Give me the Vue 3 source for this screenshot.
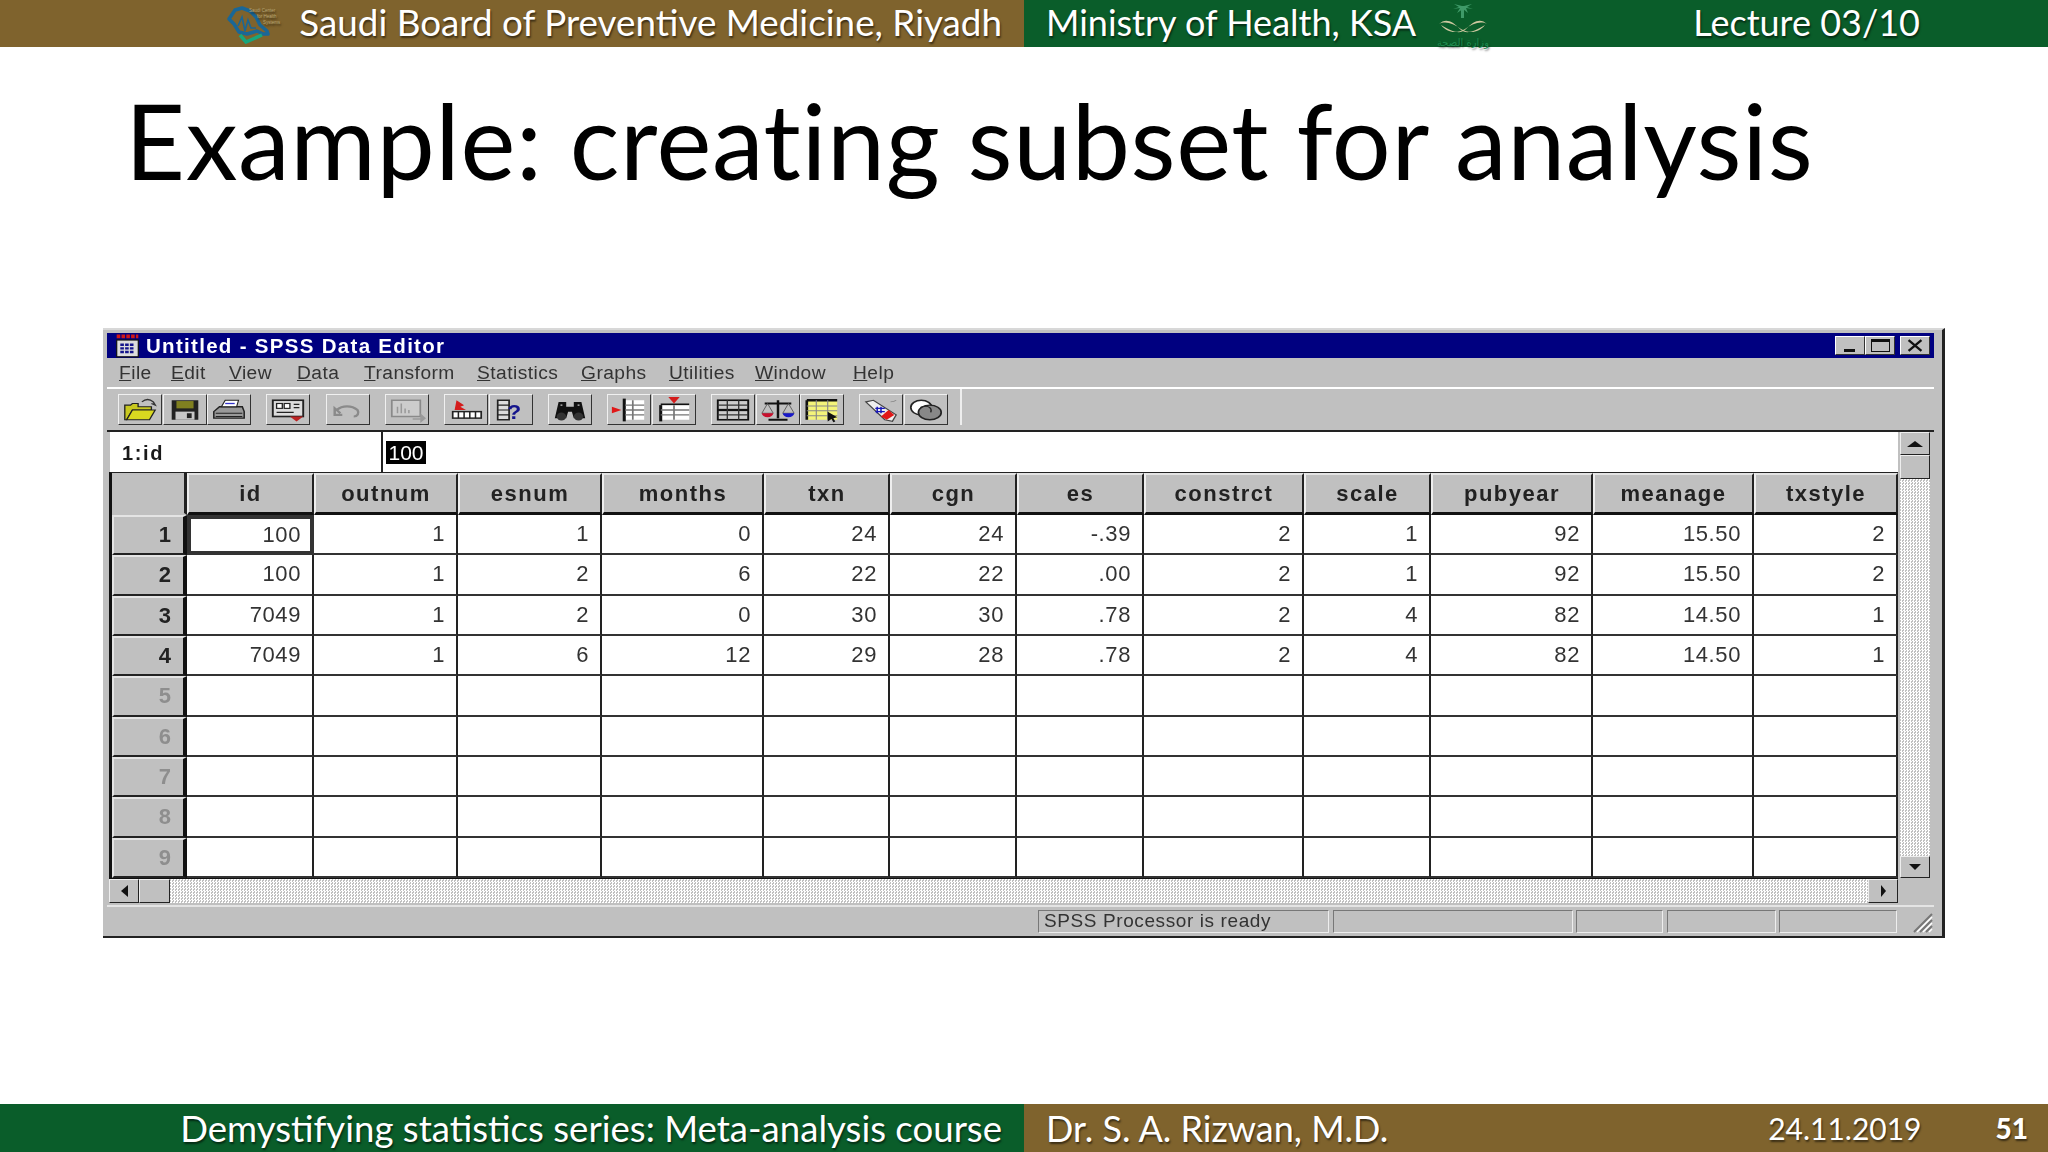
<script setup>
const columns = ['id', 'outnum', 'esnum', 'months', 'txn', 'cgn', 'es', 'constrct', 'scale', 'pubyear', 'meanage', 'txstyle']

const rows = [
  ['100', '1', '1', '0', '24', '24', '-.39', '2', '1', '92', '15.50', '2'],
  ['100', '1', '2', '6', '22', '22', '.00', '2', '1', '92', '15.50', '2'],
  ['7049', '1', '2', '0', '30', '30', '.78', '2', '4', '82', '14.50', '1'],
  ['7049', '1', '6', '12', '29', '28', '.78', '2', '4', '82', '14.50', '1'],
  [], [], [], [], [],
]

const menus = [
  { key: 'F', rest: 'ile', width: 52 },
  { key: 'E', rest: 'dit', width: 58 },
  { key: 'V', rest: 'iew', width: 68 },
  { key: 'D', rest: 'ata', width: 67 },
  { key: 'T', rest: 'ransform', width: 113 },
  { key: 'S', rest: 'tatistics', width: 104 },
  { key: 'G', rest: 'raphs', width: 88 },
  { key: 'U', rest: 'tilities', width: 86 },
  { key: 'W', rest: 'indow', width: 98 },
  { key: 'H', rest: 'elp', width: 50 },
]

const toolGroups = [
  [
    '<path d="M2 14V5h3l1-1h3v2h7v2H6l-3 6z" fill="#c8c820" stroke="#222" stroke-width=".7"/><path d="M3 14l3-6h12l-3 6z" fill="#d8d820" stroke="#222" stroke-width=".7"/><path d="M11 3c2-2 4-2 6 0l1 2-2-1" fill="none" stroke="#333" stroke-width=".8"/>',
    '<rect x="3" y="2" width="14" height="12" fill="#222"/><rect x="5.500" y="2.500" width="9" height="4.500" fill="#808020"/><rect x="5" y="9" width="10" height="5" fill="#c8c8c8"/><rect x="11" y="10" width="2.500" height="3" fill="#222"/>',
    '<path d="M2 9l3-3h12l1 3v4H2z" fill="#999" stroke="#222" stroke-width=".8"/><path d="M6 6l2-4h7l-1 4z" fill="#fff" stroke="#222" stroke-width=".6"/><path d="M8 4h5" stroke="#33c" stroke-width=".8"/><path d="M3 10h14M3 12h14" stroke="#222" stroke-width=".7"/>',
  ],
  [
    '<rect x="2" y="2" width="16" height="10" fill="#ddd" stroke="#222" stroke-width="1"/><rect x="4" y="4" width="3" height="3" fill="#fff" stroke="#222" stroke-width=".7"/><rect x="8" y="4" width="3" height="3" fill="#fff" stroke="#222" stroke-width=".7"/><path d="M13 4.500h3M13 6.500h3M4 9.500h9" stroke="#222" stroke-width=".8"/><path d="M11 12h7l-3.500 3z" fill="#b22"/>',
  ],
  [
    '<path d="M6 10L3 7v4h4M4 8c3-3 8-3 11 0 1 2 0 4-2 4" fill="none" stroke="#8a8a8a" stroke-width="1.300"/>',
  ],
  [
    '<rect x="2" y="2" width="15" height="10" fill="#ccc" stroke="#8a8a8a" stroke-width=".9"/><path d="M5 10V6M7 10V4M9 10V7M11 10V8" stroke="#999" stroke-width=".8"/><path d="M13 13h4v-3l3 3-3 3v-2h-4z" fill="#9a9a9a"/>',
  ],
  [
    '<path d="M5 2l4 3-2 1 3 2H4z" fill="#d41c1c"/><rect x="3" y="9" width="15" height="4" fill="#fff" stroke="#222" stroke-width=".9"/><path d="M6 9v4M9 9v4M12 9v4M15 9v4" stroke="#222" stroke-width=".8"/>',
    '<rect x="3" y="2" width="6" height="12" fill="#ddd" stroke="#222" stroke-width=".9"/><path d="M3 5h6M3 8h6M3 11h6" stroke="#222" stroke-width=".7"/><text x="8" y="13.500" font-family="Liberation Sans" font-weight="700" font-size="12" fill="#14148c">?</text>',
  ],
  [
    '<path d="M4 3h4v3h4V3h4l2 10h-6l-1-4h-2l-1 4H2z" fill="#111"/><circle cx="5.500" cy="12" r="2.500" fill="#333"/><circle cx="14.500" cy="12" r="2.500" fill="#333"/><path d="M5 5h1M14 5h1" stroke="#ccc" stroke-width=".8"/>',
  ],
  [
    '<rect x="8" y="2" width="10" height="12" fill="#fff"/><path d="M7.500 1v14" stroke="#111" stroke-width="1.600"/><path d="M12 2v12M8 5h10M8 8h10M8 11h10" stroke="#777" stroke-width=".9"/><path d="M1 6l5 2-5 2z" fill="#e01818"/>',
    '<rect x="3" y="5" width="15" height="9" fill="#fff"/><path d="M3 5v10" stroke="#111" stroke-width="1.600"/><path d="M3 4.500h15" stroke="#111" stroke-width="1"/><path d="M10 5v9M3 8h15M3 11h15" stroke="#777" stroke-width=".9"/><path d="M7 0h6l-3 4z" fill="#d41c1c"/>',
  ],
  [
    '<rect x="2" y="2" width="16" height="12" fill="#ccc" stroke="#111" stroke-width="1"/><path d="M2 8h16" stroke="#111" stroke-width="1.400"/><path d="M2 5h16M2 11h16M7 2v12M13 2v12" stroke="#333" stroke-width=".7"/>',
    '<path d="M10 2v11M3 4h14M5 14h10" stroke="#111" stroke-width="1.300"/><path d="M1.500 10h6l-3-6zM12.500 10h6l-3-6z" fill="none" stroke="#555" stroke-width=".5"/><path d="M1.500 10a3 2.500 0 0 0 6 0z" fill="#c8102e"/><path d="M12.500 10a3 2.500 0 0 0 6 0z" fill="#1818c8"/>',
    '<rect x="2" y="2" width="16" height="12" fill="#f4f47a"/><path d="M2 2h16M2 2v12" stroke="#111" stroke-width="1.400"/><path d="M2 5.500h16M2 8.500h16M2 11.500h16M7 2v12M13 2v12" stroke="#888" stroke-width=".6"/><path d="M13 9l5 3.500-2 .5 1 2-1 .5-1-2-2 1.500z" fill="#111"/>',
  ],
  [
    '<path d="M2 3l4-1 12 9-2 4-4-1z" fill="#eee" stroke="#444" stroke-width=".7"/><path d="M13 14l-3-2 4-4 3 3z" fill="#e01818"/><path d="M8 6v4M10 6v4M7 7h5M7 9h5" stroke="#1818b8" stroke-width=".8"/><path d="M15 3c1 0 2 0 3-1" fill="none" stroke="#888" stroke-width=".6"/>',
    '<ellipse cx="7.500" cy="6.500" rx="5.500" ry="4.500" fill="#fff" stroke="#222" stroke-width=".9"/><ellipse cx="12" cy="9.500" rx="6" ry="4.500" fill="#888" stroke="#222" stroke-width=".9"/><path d="M7 6.500c2-1 4-1 5 0 1 1 1 1.500.5 3" fill="none" stroke="#222" stroke-width=".7"/>',
  ],
]

const statusCells = [291, 240, 87, 109, 118]
</script>

<template>
  <div class="slide">
    <header class="bar top">
      <div class="half brown left">
        <svg class="board-logo" viewBox="0 0 62 40">
          <path d="M4 15L10 6l7-2 8 3 6 6 4 8 7 6 1 3-5 0-6-3-10 3-8-2-5-8z" fill="none" stroke="#1a6797" stroke-width="3.500" stroke-linejoin="round" />
          <path d="M13 22l4-9 3 14 3-11 3 8h5" fill="none" stroke="#1a6797" stroke-width="1.600" />
          <path d="M15 31l6 7 16-7" fill="none" stroke="#17a67d" stroke-width="3.500" />
          <text x="24" y="8" class="tiny">Saudi Center</text>
          <text x="32" y="14" class="tiny">for Health</text>
          <text x="38" y="20" class="tiny">Systems</text>
        </svg>
        <span>Saudi Board of Preventive Medicine, Riyadh</span>
      </div>
      <div class="half green right">
        <span>Ministry of Health, KSA</span>
        <svg class="moh-logo" viewBox="0 0 60 50">
          <path d="M29 6l-8-2 5 3-6 2 7-1-3 5 6-4 5 4-2-5 7 1-6-2 5-3-8 2z" fill="#3f9a68" />
          <path d="M28 9h3v9h-3z" fill="#3f9a68" />
          <path d="M6 24c6-6 13-4 22 6 4 3 10 4 24-5-6 8-16 9-24 4C20 23 12 21 6 24z" fill="#cfc8a0" />
          <path d="M54 24c-6-6-13-4-22 6-4 3-10 4-24-5 6 8 16 9 24 4 8-6 16-8 22-5z" fill="#cfc8a0" />
          <text x="30" y="46" class="moh-text" text-anchor="middle">وزارة الصحة</text>
        </svg>
        <span class="lecture">Lecture 03/10</span>
      </div>
    </header>

    <main class="content">
      <h1 class="heading">Example: creating subset for analysis</h1>

      <section class="win">
        <div class="titlebar">
          <svg class="app-icon" viewBox="0 0 22 20">
            <rect x="2" y="5" width="18" height="14" fill="#ddd" stroke="#111" />
            <path d="M2 2h18" stroke="#d01818" stroke-width="3" stroke-dasharray="3 1" />
            <path d="M5 9h12M5 12h12M5 15h12" stroke="#14148c" stroke-width="2" stroke-dasharray="3 1" />
          </svg>
          <span class="title-text">Untitled - SPSS Data Editor</span>
          <div class="title-btns">
            <button class="tb"><i class="glyph-min"></i></button>
            <button class="tb"><i class="glyph-max"></i></button>
            <button class="tb close">
              <svg viewBox="0 0 20 14"><path d="M4 2l12 10M16 2L4 12" stroke="#111" stroke-width="2.200" /></svg>
            </button>
          </div>
        </div>

        <nav class="menu">
          <span v-for="m in menus" :key="m.key" class="menu-item" :style="{ width: m.width + 'px' }"><u>{{ m.key }}</u>{{ m.rest }}</span>
        </nav>

        <div class="toolbar">
          <div v-for="(group, g) in toolGroups" :key="g" class="tool-group">
            <button v-for="(icon, i) in group" :key="i" class="tool">
              <svg viewBox="0 0 20 16" preserveAspectRatio="none" v-html="icon"></svg>
            </button>
          </div>
          <div class="toolbar-end"></div>
        </div>

        <div class="client">
          <div class="data-pane">
            <div class="entry">
              <div class="entry-name">1:id</div>
              <div class="entry-value"><span>100</span></div>
            </div>

            <div class="grid">
              <div class="corner"></div>
              <div v-for="c in columns" :key="c" class="col-head">{{ c }}</div>
              <template v-for="(row, r) in rows" :key="r">
                <div class="row-head" :class="{ empty: !row.length }">{{ r + 1 }}</div>
                <div
                  v-for="(c, i) in columns"
                  :key="c"
                  class="cell"
                  :class="{ active: r === 0 && i === 0 }"
                >{{ row[i] }}</div>
              </template>
            </div>

            <div class="hscroll">
              <button class="sb"><i class="arrow left-arrow"></i></button>
              <button class="sb thumb"></button>
              <div class="track"></div>
              <button class="sb"><i class="arrow right-arrow"></i></button>
            </div>
          </div>

          <div class="vscroll">
            <button class="sb up"><i class="arrow up-arrow"></i></button>
            <button class="sb vthumb"></button>
            <div class="track"></div>
            <button class="sb down"><i class="arrow down-arrow"></i></button>
          </div>
        </div>

        <footer class="status">
          <div
            v-for="(w, i) in statusCells"
            :key="i"
            class="status-cell"
            :style="{ width: w + 'px' }"
          >{{ i === 0 ? 'SPSS Processor is ready' : '' }}</div>
          <svg class="grip" viewBox="0 0 24 24">
            <path d="M23 5L5 23M23 11L11 23M23 17L17 23" stroke="#777" stroke-width="2" />
            <path d="M23 8L8 23M23 14L14 23M23 20L20 23" stroke="#fff" stroke-width="1.500" />
          </svg>
        </footer>
      </section>
    </main>

    <footer class="bar bottom">
      <div class="half green left">
        <span>Demystifying statistics series: Meta-analysis course</span>
      </div>
      <div class="half brown right">
        <span>Dr. S. A. Rizwan, M.D.</span>
        <span class="date">24.11.2019</span>
        <b class="page-no">51</b>
      </div>
    </footer>
  </div>
</template>

<style scoped>
.slide {
  width: 2048px;
  height: 1152px;
  display: flex;
  flex-direction: column;
  background: #fff;
  overflow: hidden;
  font-family: Lato, "Open Sans", sans-serif;
}

.bar {
  display: flex;
  height: 47px;
  flex: none;
}

.bar.bottom {
  height: 48px;
}

.half {
  width: 1024px;
  display: flex;
  align-items: center;
  color: #fff;
  font-size: 36.8px;
  text-shadow: 1px 2px 2px rgba(0, 0, 0, 0.55);
  white-space: nowrap;
}

.half.right {
  font-size: 36px;
  padding-left: 22px;
}

.bottom .half.left {
  font-size: 36.6px;
}

.top .half > span {
  margin-top: -4px;
}

.brown {
  background: #7f632d;
}

.green {
  background: #0a5d2a;
}

.half.left {
  justify-content: flex-end;
  padding-right: 22px;
}

.board-logo {
  width: 62px;
  height: 40px;
  margin-right: 12px;
}

.tiny {
  font-family: "Liberation Sans", sans-serif;
  font-size: 4.5px;
  fill: #b8a777;
}

.moh-logo {
  width: 60px;
  height: 50px;
  margin: 3px 0 0 17px;
  overflow: visible;
  flex: none;
}

.moh-text {
  font-family: "DejaVu Sans", sans-serif;
  font-size: 10px;
  fill: #1f8a4e;
}

.lecture {
  margin-left: auto;
  padding-right: 128px;
}

.date {
  margin-left: auto;
  font-size: 30px;
}

.page-no {
  margin: 0 20px 0 74px;
  font-size: 28px;
  font-weight: 900;
}

.content {
  flex: 1;
  min-height: 0;
}

.heading {
  margin: 0;
  padding: 33px 0 0 125px;
  height: 281px;
  box-sizing: border-box;
  font-size: 104px;
  font-weight: 400;
  line-height: 120px;
  color: #000;
  letter-spacing: 0.6px;
  white-space: nowrap;
}

/* spss window, win95 look */
.win {
  position: relative;
  width: 1842px;
  height: 610px;
  box-sizing: border-box;
  margin-left: 103px;
  padding: 3px 8px 0 4px;
  background: #c0c0c0;
  border-top: 2px solid #d8d8d8;
  border-right: 3px solid #222;
  border-bottom: 2px solid #222;
  font-family: "Liberation Sans", Arial, sans-serif;
  color: #1a1a1a;
  filter: blur(0.5px);
}

.titlebar {
  height: 25px;
  display: flex;
  align-items: center;
  background: #000080;
}

.app-icon {
  width: 31px;
  height: 24px;
  margin-left: 5px;
  flex: none;
}

.title-text {
  margin-left: 3px;
  color: #fff;
  font-size: 20.5px;
  font-weight: 700;
  letter-spacing: 1.3px;
  white-space: nowrap;
}

.title-btns {
  display: flex;
  margin-left: auto;
  padding-right: 4px;
}

.tb {
  width: 30px;
  height: 19px;
  padding: 0;
  background: #c0c0c0;
  border: 1px solid;
  border-color: #fff #333 #333 #fff;
  display: flex;
  align-items: center;
  justify-content: center;
  position: relative;
}

.tb.close {
  margin-left: 5px;
}

.tb svg {
  width: 22px;
  height: 15px;
}

.glyph-min {
  position: absolute;
  left: 8px;
  bottom: 2px;
  width: 11px;
  height: 3px;
  background: #111;
}

.glyph-max {
  width: 19px;
  height: 13px;
  box-sizing: border-box;
  border: 1.5px solid #111;
  border-top-width: 3px;
}

.menu {
  height: 31px;
  display: flex;
  align-items: center;
  padding-left: 12px;
  box-sizing: border-box;
  border-bottom: 2px solid;
  border-image: linear-gradient(#888 50%, #fff 50%) 1;
  font-size: 19.2px;
  letter-spacing: 0.45px;
  color: #333;
}

.menu-item {
  flex: none;
  white-space: nowrap;
}

.toolbar {
  height: 41px;
  box-sizing: border-box;
  display: flex;
  gap: 15.3px;
  padding: 5px 0 0 11px;
}

.tool-group {
  display: flex;
  gap: 0.5px;
}

.tool {
  width: 44px;
  height: 31px;
  padding: 0;
  box-sizing: border-box;
  background: #c0c0c0;
  border: 1.5px solid;
  border-color: #f0f0f0 #333 #333 #f0f0f0;
  display: flex;
  align-items: center;
  justify-content: center;
}

.tool svg {
  width: 38px;
  height: 26px;
  overflow: visible;
}

.toolbar-end {
  width: 2px;
  height: 36px;
  margin: -5px 0 0 -3px;
  background: #eee;
}

.client {
  display: flex;
  align-items: stretch;
  height: 471px;
  border-top: 2px solid #222;
  padding-left: 2px;
}

.data-pane {
  width: 1789px;
  flex: none;
}

.entry {
  display: flex;
  height: 40px;
  background: #fff;
  align-items: center;
  margin-left: 1px;
  font-size: 20px;
}

.entry-name {
  width: 273px;
  height: 100%;
  display: flex;
  align-items: center;
  padding: 2px 0 0 12px;
  box-sizing: border-box;
  border-right: 2px solid #222;
  font-weight: 700;
  letter-spacing: 1.6px;
}

.entry-value {
  padding-left: 3px;
}

.entry-value span {
  display: block;
  width: 40px;
  height: 23px;
  background: #000;
  color: #fff;
  font-size: 21px;
  line-height: 23px;
  text-align: center;
}

.grid {
  display: grid;
  grid-template-columns: 75px 127px 144px 144px 162px 126px 127px 127px 160px 127px 162px 161px 144px;
  grid-template-rows: 42px repeat(9, 40.33px);
  border-top: 1px solid #222;
  border-left: 3px solid #111;
  box-sizing: border-box;
  width: 1789px;
}

.corner,
.col-head,
.row-head {
  background: #c0c0c0;
  box-sizing: border-box;
}

.col-head {
  display: flex;
  align-items: center;
  justify-content: center;
  border-left: 2px solid #eee;
  border-top: 2px solid #e4e4e4;
  border-right: 2px solid #222;
  border-bottom: 3px solid #111;
  font-size: 22px;
  font-weight: 700;
  letter-spacing: 1.5px;
  color: #222;
}

.corner {
  border-right: 3px solid #222;
  border-bottom: 2px solid #c0c0c0;
}

.row-head {
  display: flex;
  align-items: center;
  justify-content: flex-end;
  padding-right: 12px;
  border-left: 2px solid #e4e4e4;
  border-top: 2px solid #e4e4e4;
  border-right: 4px solid #111;
  border-bottom: 2px solid #222;
  font-size: 22px;
  font-weight: 700;
  color: #222;
}

.row-head.empty {
  color: #8e8e8e;
}

.cell {
  display: flex;
  align-items: center;
  justify-content: flex-end;
  padding-right: 11px;
  background: #fff;
  box-sizing: border-box;
  border-right: 2px solid #222;
  border-bottom: 2px solid #333;
  font-size: 22px;
  letter-spacing: 0.6px;
  color: #333;
}

.cell.active {
  border: 4px solid #333;
  padding-right: 9px;
}

.hscroll {
  display: flex;
  height: 25px;
  border-top: 1px solid #111;
  box-sizing: border-box;
}

.track {
  flex: 1;
  background: repeating-conic-gradient(#fff 0 25%, #c0c0c0 0 50%) 0 0 / 3px 3px;
}

.sb {
  flex: none;
  padding: 0;
  width: 30px;
  background: #c0c0c0;
  border: 1.5px solid;
  border-color: #eee #222 #222 #eee;
  display: flex;
  align-items: center;
  justify-content: center;
}

.hscroll .thumb {
  width: 31px;
}

.vscroll {
  display: flex;
  flex-direction: column;
  width: 30px;
  height: 446px;
  margin-left: 2px;
  flex: none;
}

.vscroll .sb {
  width: 100%;
}

.up {
  height: 23px;
}

.vthumb {
  height: 24px;
}

.down {
  height: 22px;
}

.arrow {
  display: block;
  width: 0;
  height: 0;
  border: solid transparent;
}

.up-arrow {
  border-width: 0 8px 6px;
  border-bottom-color: #111;
}

.down-arrow {
  border-width: 6px 6px 0;
  border-top-color: #111;
}

.left-arrow {
  border-width: 6px 7px 6px 0;
  border-right-color: #111;
}

.right-arrow {
  border-width: 6px 0 6px 5px;
  border-left-color: #111;
}

.status {
  display: flex;
  gap: 3.5px;
  padding: 3px 0 0 931px;
  height: 30px;
  margin-top: 2px;
  box-sizing: border-box;
  border-top: 2px solid #e4e4e4;
  position: relative;
}

.status-cell {
  height: 23px;
  box-sizing: border-box;
  flex: none;
  padding-left: 5px;
  border: 1.5px solid;
  border-color: #777 #eee #eee #777;
  font-size: 19px;
  line-height: 20px;
  letter-spacing: 0.6px;
  white-space: nowrap;
  color: #333;
}

.grip {
  position: absolute;
  right: 1px;
  bottom: 2px;
  width: 24px;
  height: 24px;
}
</style>

<style>
body {
  background: #fff;
}
</style>
